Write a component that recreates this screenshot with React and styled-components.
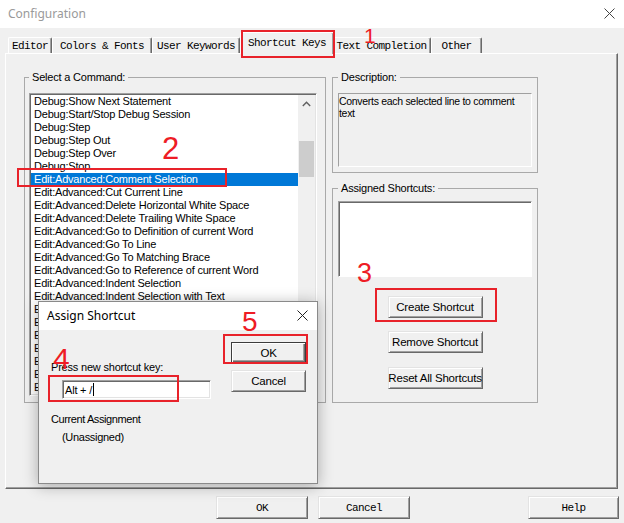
import React from 'react';
import styled, { createGlobalStyle } from 'styled-components';

const Global = createGlobalStyle`
  html, body { margin: 0; padding: 0; background: #f0f0f0; }
  body { width: 624px; height: 523px; overflow: hidden; }
  * { box-sizing: border-box; }
`;

const Window = styled.div`
  position: relative;
  width: 624px;
  height: 523px;
  background: #f0f0f0;
  display: flex;
  flex-direction: column;
  font-family: "Liberation Sans", Arial, sans-serif;
  overflow: hidden;
`;

const TitleBar = styled.div`
  height: 28px;
  flex: none;
  background: #fff;
  display: flex;
  align-items: center;
  justify-content: space-between;
  padding: 0 9px 2px ${p => p.$padLeft}px;
  font-family: "Noto Sans", "Open Sans", sans-serif;
  font-size: 12px;
  color: ${p => p.$color};
`;

const TabRow = styled.div`
  height: 25px;
  flex: none;
  display: flex;
  align-items: flex-end;
  padding-left: 8px;
`;

const Tab = styled.div`
  position: relative;
  flex: none;
  width: ${p => p.$w}px;
  height: ${p => (p.$active ? 22 : 16)}px;
  margin: 0 ${p => (p.$active ? -2 : 0)}px ${p => (p.$active ? -1 : 0)}px 0;
  z-index: ${p => (p.$active ? 2 : 1)};
  background: #f0f0f0;
  border-top: 1px solid #fff;
  border-left: 1px solid #fff;
  border-right: 1px solid #696969;
  box-shadow: inset -1px 0 0 #a0a0a0;
  border-radius: 2px 2px 0 0;
  display: flex;
  align-items: center;
  justify-content: center;
  padding-bottom: ${p => (p.$active ? 2 : 0)}px;
  font-family: "Liberation Mono", "Courier New", monospace;
  font-size: 11px;
  letter-spacing: -0.6px;
  color: #000;
  white-space: nowrap;
`;

const Panel = styled.div`
  flex: none;
  margin-left: 5px;
  width: 613px;
  height: 436px;
  border-top: 1px solid #fff;
  border-left: 1px solid #fff;
  border-right: 1px solid #696969;
  border-bottom: 1px solid #696969;
  box-shadow: inset -1px -1px 0 #a0a0a0;
  display: flex;
  align-items: flex-start;
  gap: 6px;
  padding: 16px 0 0 18px;
`;

const GroupBox = styled.fieldset`
  margin: 0;
  min-width: 0;
  flex: none;
  width: ${p => p.$w}px;
  padding: ${p => p.$pad};
  border: 1px solid #a9a9a9;
  display: flex;
  flex-direction: column;
`;

const Legend = styled.legend`
  padding: 0 3px;
  margin: 0;
  font-size: 11px;
  letter-spacing: -0.2px;
  line-height: 14px;
  color: #000;
`;

const ListBox = styled.div`
  margin-top: 9px;
  width: 288px;
  height: 303px;
  background: #fff;
  border: 1px solid;
  border-color: #a0a0a0 #fff #fff #a0a0a0;
  padding: 1px;
  box-shadow: inset 1px 1px 0 #696969, inset -1px -1px 0 #e3e3e3;
  display: flex;
`;

const Rows = styled.div`
  flex: 1;
  min-width: 0;
  overflow: hidden;
`;

const Row = styled.div`
  height: 13px;
  line-height: 13px;
  padding-left: 3px;
  font-size: 11px;
  letter-spacing: -0.2px;
  white-space: nowrap;
  overflow: hidden;
  color: ${p => (p.$selected ? '#fff' : '#000')};
  background: ${p => (p.$selected ? '#0078d7' : 'transparent')};
`;

const ScrollBar = styled.div`
  width: 17px;
  flex: none;
  background: #f0f0f0;
  display: flex;
  flex-direction: column;
  align-items: center;
`;

const ScrollArrow = styled.div`
  width: 17px;
  height: 17px;
  flex: none;
  display: flex;
  align-items: center;
  justify-content: center;
`;

const ScrollTrack = styled.div`
  flex: 1;
  width: 15px;
`;

const Thumb = styled.div`
  width: 15px;
  height: ${p => p.$h}px;
  margin-top: ${p => p.$top}px;
  background: #cdcdcd;
`;

const RightColumn = styled.div`
  width: 206px;
  flex: none;
  display: flex;
  flex-direction: column;
  gap: 8px;
`;

const StaticBox = styled.div`
  margin-top: ${p => p.$mt}px;
  height: ${p => p.$h}px;
  width: 194px;
  background: ${p => p.$bg};
  border: 1px solid;
  border-color: #a0a0a0 #fff #fff #a0a0a0;
  padding: 1px 2px 0 0;
  font-size: 10.5px;
  letter-spacing: -0.3px;
  line-height: 12px;
  color: #000;
`;

const SunkenList = styled(StaticBox)`
  padding: 1px;
  box-shadow: inset 1px 1px 0 #696969;
`;

const Button = styled.div`
  flex: none;
  align-self: ${p => p.$align || 'auto'};
  width: ${p => p.$w}px;
  height: ${p => p.$h}px;
  margin-top: ${p => p.$mt || 0}px;
  background: #f0f0f0;
  border: 1px solid;
  border-color: ${p => (p.$default ? '#3c3c3c' : '#e3e3e3 #696969 #696969 #e3e3e3')};
  box-shadow: ${p =>
    p.$default
      ? 'inset 1px 1px 0 #fff, inset -1px -1px 0 #696969, inset -2px -2px 0 #a0a0a0'
      : 'inset 1px 1px 0 #fff, inset -1px -1px 0 #a0a0a0'};
  display: flex;
  align-items: center;
  justify-content: center;
  font-size: ${p => (p.$mono ? 11 : 11.5)}px;
  font-family: ${p => (p.$mono ? '"Liberation Mono", "Courier New", monospace' : '"Liberation Sans", Arial, sans-serif')};
  letter-spacing: ${p => (p.$mono ? -0.6 : -0.2)}px;
  color: #000;
  white-space: nowrap;
`;

const Footer = styled.div`
  flex: none;
  display: flex;
  justify-content: flex-end;
  gap: 10px;
  padding: 7px 5px 0 0;
`;

const FooterSpacer = styled.div`
  width: 98px;
  flex: none;
`;

const Dialog = styled.div`
  position: absolute;
  left: 38px;
  top: 301px;
  width: 280px;
  height: 183px;
  z-index: 5;
  background: #f0f0f0;
  border: 1px solid #8a8a8a;
  box-shadow: 0 2px 14px rgba(0, 0, 0, 0.3);
  display: flex;
  flex-direction: column;
`;

const DialogBody = styled.div`
  flex: 1;
  display: flex;
  padding: 12px 11px 0 12px;
`;

const DialogLeft = styled.div`
  flex: 1;
  display: flex;
  flex-direction: column;
  padding-top: 18px;
`;

const DialogRight = styled.div`
  width: 75px;
  flex: none;
  display: flex;
  flex-direction: column;
  gap: 7px;
`;

const Label = styled.div`
  font-size: 11px;
  line-height: 14px;
  letter-spacing: ${p => p.$ls ?? -0.2}px;
  margin: ${p => p.$m || 0};
  color: #000;
  white-space: nowrap;
`;

const KeyInput = styled.div`
  margin: 6px 0 0 11px;
  width: 149px;
  height: 19px;
  background: #fff;
  border: 1px solid;
  border-color: #a0a0a0 #fff #fff #a0a0a0;
  padding: 1px 1px 1px 2px;
  box-shadow: inset 1px 1px 0 #696969, inset -1px -1px 0 #e3e3e3;
  display: flex;
  align-items: center;
  font-size: 11px;
  letter-spacing: -0.2px;
  color: #000;
`;

const Caret = styled.span`
  display: inline-block;
  width: 1px;
  height: 13px;
  background: #000;
  margin-left: 1px;
`;

const Mark = styled.div`
  position: absolute;
  left: ${p => p.$x}px;
  top: ${p => p.$y}px;
  width: ${p => p.$w}px;
  height: ${p => p.$h}px;
  border: 2px solid #e8222a;
  z-index: 10;
  pointer-events: none;
`;

const Digit = styled.span`
  position: absolute;
  left: ${p => p.$x}px;
  top: ${p => p.$y}px;
  font-family: "Liberation Sans", Arial, sans-serif;
  font-size: ${p => p.$size}px;
  line-height: 1;
  color: #ee1c25;
  z-index: 11;
  pointer-events: none;
`;

const CloseIcon = ({ color = '#333' }) => (
  <svg width="11" height="11" viewBox="0 0 11 11">
    <path d="M0.5 0.5 L10.5 10.5 M10.5 0.5 L0.5 10.5" stroke={color} strokeWidth="1" fill="none" />
  </svg>
);

const ChevronUp = () => (
  <svg width="9" height="6" viewBox="0 0 9 6">
    <path d="M0.8 5 L4.5 1.3 L8.2 5" stroke="#606060" strokeWidth="1.4" fill="none" />
  </svg>
);

const ChevronDown = () => (
  <svg width="9" height="6" viewBox="0 0 9 6">
    <path d="M0.8 1 L4.5 4.7 L8.2 1" stroke="#606060" strokeWidth="1.4" fill="none" />
  </svg>
);

const tabs = [
  { label: 'Editor', w: 44 },
  { label: 'Colors & Fonts', w: 100 },
  { label: 'User Keywords', w: 88 },
  { label: 'Shortcut Keys', w: 94, active: true },
  { label: 'Text Completion', w: 99 },
  { label: 'Other', w: 51 },
];

const commands = [
  'Debug:Show Next Statement',
  'Debug:Start/Stop Debug Session',
  'Debug:Step',
  'Debug:Step Out',
  'Debug:Step Over',
  'Debug:Stop',
  'Edit:Advanced:Comment Selection',
  'Edit:Advanced:Cut Current Line',
  'Edit:Advanced:Delete Horizontal White Space',
  'Edit:Advanced:Delete Trailing White Space',
  'Edit:Advanced:Go to Definition of current Word',
  'Edit:Advanced:Go To Line',
  'Edit:Advanced:Go To Matching Brace',
  'Edit:Advanced:Go to Reference of current Word',
  'Edit:Advanced:Indent Selection',
  'Edit:Advanced:Indent Selection with Text',
  'Edit:Advanced:Join Lines',
  'Edit:Advanced:Make Lowercase',
  'Edit:Advanced:Make Uppercase',
  'Edit:Advanced:Move Line Down',
  'Edit:Advanced:Move Line Up',
  'Edit:Advanced:Open File Under Cursor',
  'Edit:Advanced:Select Word',
];

const marks = [
  { x: 241, y: 30, w: 94, h: 28 },
  { x: 17, y: 168, w: 210, h: 19 },
  { x: 375, y: 288, w: 122, h: 34 },
  { x: 48, y: 375, w: 131, h: 27 },
  { x: 223, y: 334, w: 85, h: 30 },
];

const digits = [
  { n: '1', x: 364, y: 25, size: 21 },
  { n: '2', x: 162, y: 133, size: 31 },
  { n: '3', x: 357, y: 260, size: 27 },
  { n: '4', x: 53, y: 344, size: 30 },
  { n: '5', x: 242, y: 308, size: 28 },
];

export default function App() {
  return (
    <>
      <Global />
      <Window>
        <TitleBar $padLeft={8} $color="#9a9a9a">
          <span>Configuration</span>
          <CloseIcon color="#444" />
        </TitleBar>

        <TabRow>
          {tabs.map(t => (
            <Tab key={t.label} $w={t.w} $active={t.active}>
              {t.label}
            </Tab>
          ))}
        </TabRow>

        <Panel>
          <GroupBox $w={302} $pad="0 7px 6px 4px">
            <Legend>Select a Command:</Legend>
            <ListBox>
              <Rows>
                {commands.map((c, i) => (
                  <Row key={c} $selected={i === 6}>
                    {c}
                  </Row>
                ))}
              </Rows>
              <ScrollBar>
                <ScrollArrow>
                  <ChevronUp />
                </ScrollArrow>
                <ScrollTrack>
                  <Thumb $top={29} $h={36} />
                </ScrollTrack>
                <ScrollArrow>
                  <ChevronDown />
                </ScrollArrow>
              </ScrollBar>
            </ListBox>
          </GroupBox>

          <RightColumn>
            <GroupBox $w={206} $pad="0 5px 5px 5px">
              <Legend>Description:</Legend>
              <StaticBox $mt={9} $h={74} $bg="#f0f0f0">
                Converts each selected line to comment text
              </StaticBox>
            </GroupBox>
            <GroupBox $w={206} $pad="0 5px 13px 5px">
              <Legend>Assigned Shortcuts:</Legend>
              <SunkenList $mt={6} $h={76} $bg="#fff" />
              <Button $align="center" $w={95} $h={22} $mt={19}>Create Shortcut</Button>
              <Button $align="center" $w={95} $h={22} $mt={13}>Remove Shortcut</Button>
              <Button $align="center" $w={95} $h={22} $mt={14}>Reset All Shortcuts</Button>
            </GroupBox>
          </RightColumn>
        </Panel>

        <Footer>
          <Button $mono $w={92} $h={23}>OK</Button>
          <Button $mono $w={92} $h={23}>Cancel</Button>
          <FooterSpacer />
          <Button $mono $w={91} $h={23}>Help</Button>
        </Footer>

        <Dialog>
          <TitleBar $padLeft={8} $color="#000">
            <span>Assign Shortcut</span>
            <CloseIcon color="#222" />
          </TitleBar>
          <DialogBody>
            <DialogLeft>
              <Label>Press new shortcut key:</Label>
              <KeyInput>
                Alt + /<Caret />
              </KeyInput>
              <Label $ls={-0.4} $m="13px 0 0 0">Current Assignment</Label>
              <Label $ls={-0.3} $m="4px 0 0 11px">(Unassigned)</Label>
            </DialogLeft>
            <DialogRight>
              <Button $default $w={75} $h={21}>OK</Button>
              <Button $w={75} $h={22}>Cancel</Button>
            </DialogRight>
          </DialogBody>
        </Dialog>

        {marks.map((m, i) => (
          <Mark key={i} $x={m.x} $y={m.y} $w={m.w} $h={m.h} />
        ))}
        {digits.map(d => (
          <Digit key={d.n} $x={d.x} $y={d.y} $size={d.size}>
            {d.n}
          </Digit>
        ))}
      </Window>
    </>
  );
}
